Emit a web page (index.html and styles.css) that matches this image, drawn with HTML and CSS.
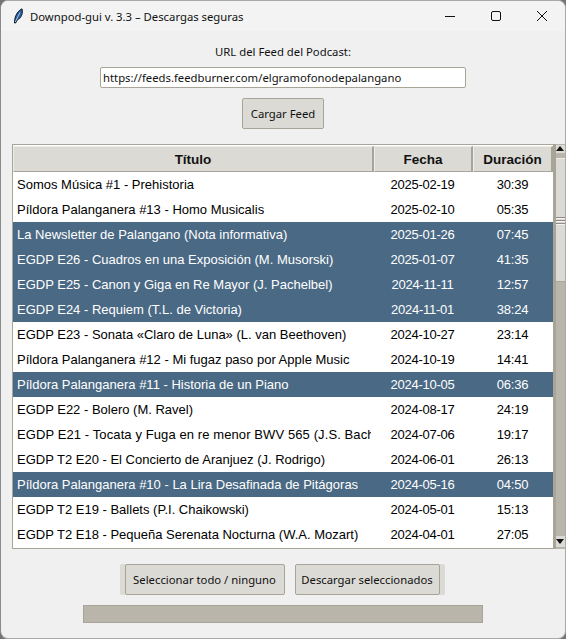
FILE: index.html
```html
<!DOCTYPE html>
<html lang="es">
<head>
    <meta charset="UTF-8">
    <meta name="viewport" content="width=device-width, initial-scale=1.0">
    <title>Downpod-gui v. 3.3 – Descargas seguras</title>
    <link rel="stylesheet" href="styles.css">
</head>
<body>
    <div class="window">
        <div class="titlebar">
            <svg class="app-icon" width="16" height="16" viewBox="0 0 16 16">
                <path d="M3.5 15 C3.5 10 5 4 11 0.8 C12.2 5 10.5 10 6.2 12 L4.6 15 Z" fill="#2a62a3" stroke="#0f1c2b" stroke-width="1"/>
                <path d="M4.2 14 L9 4.5" stroke="#bcd8f0" stroke-width="0.8" fill="none"/>
            </svg>
            <span class="title-text">Downpod-gui v. 3.3 – Descargas seguras</span>
            <div class="win-controls">
                <svg class="win-btn" width="46" height="30" viewBox="0 0 46 30"><path d="M18 15.5 H28" stroke="#111" stroke-width="1"/></svg>
                <svg class="win-btn" width="46" height="30" viewBox="0 0 46 30"><rect x="18.5" y="10.5" width="9" height="9" rx="1.5" fill="none" stroke="#111" stroke-width="1"/></svg>
                <svg class="win-btn" width="46" height="30" viewBox="0 0 46 30"><path d="M18 10 L28 20 M28 10 L18 20" stroke="#111" stroke-width="1"/></svg>
            </div>
        </div>

        <div class="content">
            <label class="url-label" for="url">URL del Feed del Podcast:</label>
            <input class="url-input" id="url" type="text" value="https://feeds.feedburner.com/elgramofonodepalangano">
            <button class="btn load-btn">Cargar Feed</button>

            <div class="table-row">
                <div class="table-box">
                    <div class="table-head">
                        <div class="head-cell col-title">Título</div>
                        <div class="head-cell col-date">Fecha</div>
                        <div class="head-cell col-dur">Duración</div>
                    </div>
                    <div class="row"><div class="col-title">Somos Música #1 - Prehistoria</div><div class="col-date">2025-02-19</div><div class="col-dur">30:39</div></div>
                    <div class="row"><div class="col-title">Píldora Palanganera #13 - Homo Musicalis</div><div class="col-date">2025-02-10</div><div class="col-dur">05:35</div></div>
                    <div class="row selected"><div class="col-title">La Newsletter de Palangano (Nota informativa)</div><div class="col-date">2025-01-26</div><div class="col-dur">07:45</div></div>
                    <div class="row selected"><div class="col-title">EGDP E26 - Cuadros en una Exposición (M. Musorski)</div><div class="col-date">2025-01-07</div><div class="col-dur">41:35</div></div>
                    <div class="row selected"><div class="col-title">EGDP E25 - Canon y Giga en Re Mayor (J. Pachelbel)</div><div class="col-date">2024-11-11</div><div class="col-dur">12:57</div></div>
                    <div class="row selected"><div class="col-title">EGDP E24 - Requiem (T.L. de Victoria)</div><div class="col-date">2024-11-01</div><div class="col-dur">38:24</div></div>
                    <div class="row"><div class="col-title">EGDP E23 - Sonata «Claro de Luna» (L. van Beethoven)</div><div class="col-date">2024-10-27</div><div class="col-dur">23:14</div></div>
                    <div class="row"><div class="col-title">Píldora Palanganera #12 - Mi fugaz paso por Apple Music</div><div class="col-date">2024-10-19</div><div class="col-dur">14:41</div></div>
                    <div class="row selected"><div class="col-title">Píldora Palanganera #11 - Historia de un Piano</div><div class="col-date">2024-10-05</div><div class="col-dur">06:36</div></div>
                    <div class="row"><div class="col-title">EGDP E22 - Bolero (M. Ravel)</div><div class="col-date">2024-08-17</div><div class="col-dur">24:19</div></div>
                    <div class="row row-long"><div class="col-title">EGDP E21 - Tocata y Fuga en re menor BWV 565 (J.S. Bach)</div><div class="col-date">2024-07-06</div><div class="col-dur">19:17</div></div>
                    <div class="row"><div class="col-title">EGDP T2 E20 - El Concierto de Aranjuez (J. Rodrigo)</div><div class="col-date">2024-06-01</div><div class="col-dur">26:13</div></div>
                    <div class="row selected"><div class="col-title">Píldora Palanganera #10 - La Lira Desafinada de Pitágoras</div><div class="col-date">2024-05-16</div><div class="col-dur">04:50</div></div>
                    <div class="row"><div class="col-title">EGDP T2 E19 - Ballets (P.I. Chaikowski)</div><div class="col-date">2024-05-01</div><div class="col-dur">15:13</div></div>
                    <div class="row"><div class="col-title">EGDP T2 E18 - Pequeña Serenata Nocturna (W.A. Mozart)</div><div class="col-date">2024-04-01</div><div class="col-dur">27:05</div></div>
                </div>
                <div class="scrollbar">
                    <div class="arrow arrow-up"></div>
                    <div class="thumb"><div class="grip"></div></div>
                    <div class="trough"></div>
                    <div class="arrow arrow-down"></div>
                </div>
            </div>

            <div class="actions">
                <button class="btn select-btn">Seleccionar todo / ninguno</button>
                <button class="btn download-btn">Descargar seleccionados</button>
            </div>
            <div class="progress"></div>
        </div>
    </div>
</body>
</html>
```

FILE: styles.css
```css
* {
    box-sizing: border-box;
}

body {
    margin: 0;
    background: #6f7478;
    font-family: "Noto Sans", "Open Sans", sans-serif;
    font-size: 11.3px;
    color: #111;
}

.window {
    width: 566px;
    height: 639px;
    background: #f0f0f0;
    border-radius: 8px;
    border: 1px solid #a9a9a9;
    border-left-color: #8a8a8a;
    overflow: hidden;
}

.titlebar {
    height: 30px;
    display: flex;
    align-items: center;
    background: #f3f3f3;
    padding-left: 10px;
}

.app-icon {
    margin-right: 3px;
}

.win-controls {
    margin-left: auto;
    display: flex;
}

.content {
    display: flex;
    flex-direction: column;
    align-items: center;
}

.url-label {
    margin-top: 12px;
    line-height: 17px;
}

.url-input {
    width: 366px;
    height: 21px;
    margin-top: 7px;
    padding: 0 2px;
    border: 1px solid #a8a498;
    border-radius: 2px;
    background: #fff;
    font: 11.3px "Noto Sans", sans-serif;
    color: #111;
    outline: none;
}

.btn {
    height: 31px;
    padding: 0;
    background: #dcdad5;
    border: 1px solid #a8a498;
    border-radius: 2px;
    font: 11.3px "Noto Sans", sans-serif;
    color: #111;
    white-space: nowrap;
}

.load-btn {
    width: 82px;
    margin-top: 10px;
}

.table-row {
    display: flex;
    align-self: stretch;
    margin: 15px 0 0 11px;
    height: 405px;
}

.table-box {
    width: 542px;
    flex: none;
    border: 1px solid #a8a498;
    background: #fff;
    font-family: "Liberation Sans", Arial, sans-serif;
    font-size: 13px;
    color: #000;
    overflow: hidden;
}

.table-head {
    display: flex;
    height: 27px;
    padding-top: 1px;
}

.head-cell {
    background: #dcdad5;
    border: 1px solid #a8a498;
    border-left-color: #eeece8;
    border-top-color: #eeece8;
    border-right-width: 2px;
    font-weight: bold;
    font-size: 13.5px;
    text-align: center;
    line-height: 25px;
    color: #111;
}

.head-cell.col-title {
    width: 361px;
}

.head-cell.col-dur {
    width: 80px;
}

.row {
    display: flex;
    height: 25px;
    line-height: 25px;
}

.col-title {
    width: 360px;
    flex: none;
    white-space: nowrap;
    overflow: hidden;
}

.row .col-title {
    padding-left: 4px;
    width: 358px;
}

.row .col-date {
    margin-left: 2px;
}

.col-date {
    width: 99px;
    flex: none;
    text-align: center;
}

.col-dur {
    width: 81px;
    flex: none;
    text-align: center;
}

.row .col-date,
.row .col-dur {
    letter-spacing: -0.25px;
}

.row-long .col-title {
    letter-spacing: 0.1px;
}

.row.selected {
    background: #4a6984;
    color: #fff;
}

.scrollbar {
    width: 11px;
    flex: none;
    display: flex;
    flex-direction: column;
    padding-top: 1px;
    background: #bab5ab;
    border-left: 2px solid #a8a498;
}

.arrow {
    flex: none;
    background: #dcdad5;
    position: relative;
}

.arrow::after {
    content: "";
    position: absolute;
    left: 0;
    border-left: 4px solid transparent;
    border-right: 4px solid transparent;
}

.arrow-up {
    height: 8px;
}

.arrow-up::after {
    top: 1px;
    border-bottom: 5px solid #111;
}

.arrow-down {
    height: 11px;
    margin-bottom: 2px;
}

.arrow-down::after {
    top: 3px;
    border-top: 5px solid #111;
}

.thumb {
    height: 124px;
    flex: none;
    margin-top: 5px;
    background: #dcdad5;
    border-top: 1px solid #eeece8;
    border-bottom: 1px solid #a8a498;
    display: flex;
    align-items: center;
}

.grip {
    width: 100%;
    height: 9px;
    background: repeating-linear-gradient(#dcdad5 0 1px, #8f8b82 1px 2px, #f4f3f0 2px 3px);
}

.trough {
    flex: 1;
}

.actions {
    display: flex;
    gap: 10px;
    margin: 15px 2px 0 0;
}

.select-btn {
    width: 160px;
    box-shadow: -5px 0 0 #dcdad5;
}

.download-btn {
    width: 145px;
    box-shadow: 5px 0 0 #dcdad5;
}

.progress {
    width: 400px;
    height: 18px;
    margin-top: 10px;
    background: #bab5ab;
    border: 1px solid #a8a498;
}
```
